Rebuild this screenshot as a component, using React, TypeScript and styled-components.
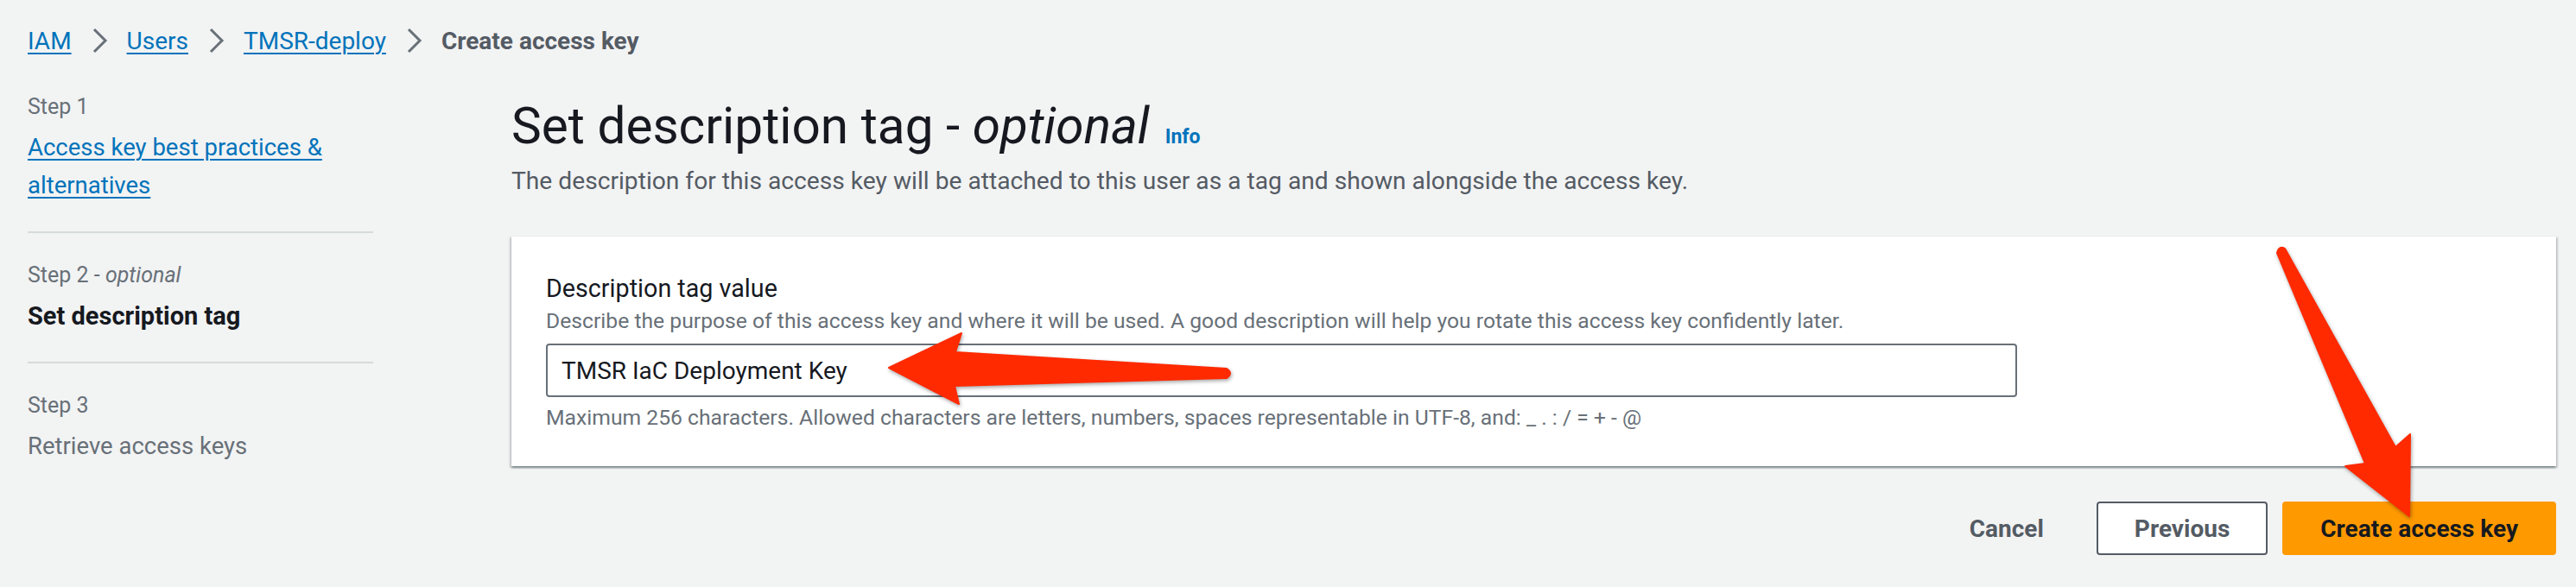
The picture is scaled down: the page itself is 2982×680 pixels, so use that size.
import React from 'react';
import styled, { createGlobalStyle } from 'styled-components';

const palette = {
  bg: '#f2f3f3',
  text: '#16191f',
  gray: '#545b64',
  muted: '#687078',
  link: '#0073bb',
  line: '#d5dbdb',
  orange: '#ff9900',
  red: '#ff2a00',
};

const GlobalStyle = createGlobalStyle`
  body {
    margin: 0;
    background: ${palette.bg};
    font-family: Roboto, 'Liberation Sans', Arial, sans-serif;
    color: ${palette.text};
  }
`;

const Page = styled.div`
  position: relative;
  width: 2982px;
  height: 680px;
  box-sizing: border-box;
  padding: 27px 23px 0 32px;
  overflow: hidden;
`;

const Breadcrumbs = styled.nav`
  display: flex;
  align-items: center;
  height: 40px;
  font-size: 28px;
`;

const Crumb = styled.a`
  color: ${palette.link};
  text-decoration: underline;
  text-decoration-thickness: 2px;
  text-underline-offset: 4px;
`;

const CurrentCrumb = styled.span`
  color: ${palette.gray};
  font-weight: 700;
`;

const Chevron = styled.svg`
  margin: 0 22px 0 24px;
  flex-shrink: 0;
`;

const Layout = styled.div`
  display: grid;
  grid-template-columns: 400px 1fr;
  column-gap: 160px;
  margin-top: 39px;
`;

const Steps = styled.ol`
  list-style: none;
  margin: 0;
  padding: 0;
`;

const StepItem = styled.li`
  padding: 31px 0;
  border-top: 2px solid ${palette.line};

  &:first-child {
    padding-top: 0;
    border-top: none;
  }
`;

const StepLabel = styled.div`
  font-size: 25px;
  line-height: 36px;
  color: ${palette.muted};

  em {
    font-style: italic;
  }
`;

const StepTitle = styled.div<{ $state: 'link' | 'active' | 'disabled' }>`
  margin-top: 7px;
  font-size: ${(p) => (p.$state === 'active' ? 29 : 27.5)}px;
  line-height: 44px;
  font-weight: ${(p) => (p.$state === 'active' ? 700 : 400)};
  color: ${(p) =>
    p.$state === 'link'
      ? palette.link
      : p.$state === 'active'
      ? palette.text
      : palette.muted};
  text-decoration: ${(p) => (p.$state === 'link' ? 'underline' : 'none')};
  text-decoration-thickness: 2px;
  text-underline-offset: 4px;
`;

const Main = styled.main`
  display: flex;
  flex-direction: column;
  padding-top: 8px;
`;

const HeadingRow = styled.div`
  display: flex;
  align-items: baseline;
`;

const Heading = styled.h1`
  margin: 0;
  font-size: 58.5px;
  line-height: 64px;
  font-weight: 400;
  color: ${palette.text};

  em {
    font-style: italic;
  }
`;

const InfoLink = styled.a`
  margin-left: 18px;
  font-size: 23px;
  font-weight: 700;
  color: ${palette.link};
`;

const Lead = styled.p`
  margin: 12px 0 0;
  font-size: 28.2px;
  line-height: 40px;
  color: ${palette.gray};
`;

const Card = styled.section`
  margin-top: 43px;
  padding: 40px;
  background: #fff;
  border-top: 1px solid #eaeded;
  box-shadow: 0 2px 2px 0 rgba(0, 28, 36, 0.3),
    2px 2px 2px 0 rgba(0, 28, 36, 0.15), -2px 2px 2px 0 rgba(0, 28, 36, 0.15);
`;

const FieldLabel = styled.label`
  display: block;
  font-size: 28.7px;
  line-height: 40px;
  color: ${palette.text};
`;

const FieldHint = styled.div<{ $gap: number }>`
  margin-top: ${(p) => p.$gap}px;
  font-size: 24.7px;
  line-height: 32px;
  color: ${palette.muted};
`;

const TextInput = styled.input`
  display: block;
  box-sizing: border-box;
  width: 1703px;
  height: 62px;
  margin-top: 10px;
  padding: 0 16px;
  border: 2px solid ${palette.muted};
  border-radius: 4px;
  background: #fff;
  font-family: inherit;
  font-size: 28px;
  color: ${palette.text};
  outline: none;
`;

const Actions = styled.div`
  display: flex;
  justify-content: flex-end;
  gap: 17px;
  margin-top: 41px;
`;

const Button = styled.button<{ $variant: 'link' | 'normal' | 'primary' }>`
  box-sizing: border-box;
  height: 62px;
  padding: 0 42px;
  border-radius: 4px;
  font-family: inherit;
  font-size: 28px;
  font-weight: 700;
  cursor: pointer;
  border: 2px solid
    ${(p) =>
      p.$variant === 'normal'
        ? palette.gray
        : p.$variant === 'primary'
        ? palette.orange
        : 'transparent'};
  background: ${(p) =>
    p.$variant === 'primary' ? palette.orange : p.$variant === 'normal' ? '#fff' : 'transparent'};
  color: ${(p) => (p.$variant === 'primary' ? palette.text : palette.gray)};
`;

const Annotations = styled.svg`
  position: absolute;
  top: 0;
  left: 0;
  pointer-events: none;
  filter: drop-shadow(1px 2px 2px rgba(0, 0, 0, 0.35));
`;

const ChevronIcon = () => (
  <Chevron width="18" height="30" viewBox="0 0 18 30">
    <polyline
      points="2,2 15,15 2,28"
      fill="none"
      stroke={palette.muted}
      strokeWidth="3"
      strokeLinejoin="miter"
    />
  </Chevron>
);

const App: React.FC = () => {
  return (
    <>
      <GlobalStyle />
      <Page>
        <Breadcrumbs>
          <Crumb href="#">IAM</Crumb>
          <ChevronIcon />
          <Crumb href="#">Users</Crumb>
          <ChevronIcon />
          <Crumb href="#">TMSR-deploy</Crumb>
          <ChevronIcon />
          <CurrentCrumb>Create access key</CurrentCrumb>
        </Breadcrumbs>

        <Layout>
          <Steps>
            <StepItem>
              <StepLabel>Step 1</StepLabel>
              <StepTitle $state="link">Access key best practices &amp; alternatives</StepTitle>
            </StepItem>
            <StepItem>
              <StepLabel>
                Step 2 - <em>optional</em>
              </StepLabel>
              <StepTitle $state="active">Set description tag</StepTitle>
            </StepItem>
            <StepItem>
              <StepLabel>Step 3</StepLabel>
              <StepTitle $state="disabled">Retrieve access keys</StepTitle>
            </StepItem>
          </Steps>

          <Main>
            <HeadingRow>
              <Heading>
                Set description tag - <em>optional</em>
              </Heading>
              <InfoLink>Info</InfoLink>
            </HeadingRow>
            <Lead>
              The description for this access key will be attached to this user as a tag and shown
              alongside the access key.
            </Lead>

            <Card>
              <FieldLabel htmlFor="tag">Description tag value</FieldLabel>
              <FieldHint $gap={2}>
                Describe the purpose of this access key and where it will be used. A good
                description will help you rotate this access key confidently later.
              </FieldHint>
              <TextInput id="tag" defaultValue="TMSR IaC Deployment Key" />
              <FieldHint $gap={8}>
                Maximum 256 characters. Allowed characters are letters, numbers, spaces
                representable in UTF-8, and: _ . : / = + - @
              </FieldHint>
            </Card>

            <Actions>
              <Button $variant="link">Cancel</Button>
              <Button $variant="normal">Previous</Button>
              <Button $variant="primary">Create access key</Button>
            </Actions>
          </Main>
        </Layout>

        <Annotations width="2982" height="680" viewBox="0 0 2982 680">
          <path
            d="M1029,426 L1113,386 L1106,408 L1420,427 Q1428,432 1420,438 L1105,447 L1110,468 Z"
            fill={palette.red}
            stroke={palette.red}
            strokeWidth="2"
            strokeLinejoin="round"
          />
          <path
            d="M2636,293 Q2638,284 2645,288 L2773,518 L2790,503 L2789,598 L2715,540 L2738,537 Z"
            fill={palette.red}
            stroke={palette.red}
            strokeWidth="2"
            strokeLinejoin="round"
          />
        </Annotations>
      </Page>
    </>
  );
};

export default App;
